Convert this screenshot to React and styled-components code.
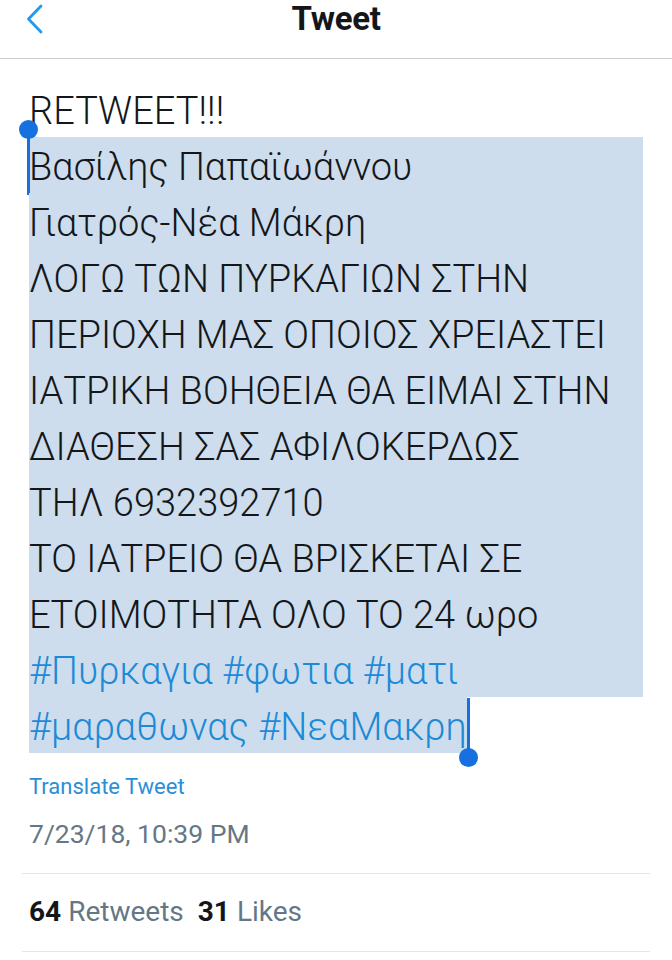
import styled, { createGlobalStyle } from "styled-components";

const GlobalStyle = createGlobalStyle`
  body {
    margin: 0;
    background: #ffffff;
    font-family: Roboto, "Noto Sans", sans-serif;
  }
`;

const lines = [
  { text: "Βασίλης Παπαϊωάννου" },
  { text: "Γιατρός-Νέα Μάκρη" },
  { text: "ΛΟΓΩ ΤΩΝ ΠΥΡΚΑΓΙΩΝ ΣΤΗΝ" },
  { text: "ΠΕΡΙΟΧΗ ΜΑΣ ΟΠΟΙΟΣ ΧΡΕΙΑΣΤΕΙ" },
  { text: "ΙΑΤΡΙΚΗ ΒΟΗΘΕΙΑ ΘΑ ΕΙΜΑΙ ΣΤΗΝ" },
  { text: "ΔΙΑΘΕΣΗ ΣΑΣ ΑΦΙΛΟΚΕΡΔΩΣ" },
  { text: "ΤΗΛ 6932392710" },
  { text: "ΤΟ ΙΑΤΡΕΙΟ ΘΑ ΒΡΙΣΚΕΤΑΙ ΣΕ" },
  { text: "ΕΤΟΙΜΟΤΗΤΑ ΟΛΟ ΤΟ 24 ωρο" },
];

const App = () => {
  return (
    <>
      <GlobalStyle />
      <Page>
        <Header>
          <BackButton aria-label="Back">
            <svg width="19" height="30" viewBox="0 0 19 30" fill="none">
              <path
                d="M16 2 L3.5 15 L16 28"
                stroke="#1d9bf0"
                strokeWidth="2.8"
                strokeLinecap="round"
                strokeLinejoin="round"
              />
            </svg>
          </BackButton>
          <Title>Tweet</Title>
        </Header>

        <Body>
          <Line>RETWEET!!!</Line>
          {lines.map((line, i) => (
            <Line key={i} $selected="full">
              {i === 0 && (
                <StartHandle>
                  <Knob />
                </StartHandle>
              )}
              {line.text}
            </Line>
          ))}
          <Line $selected="full">
            <Tag>#Πυρκαγια</Tag> <Tag>#φωτια</Tag> <Tag>#ματι</Tag>
          </Line>
          <Line>
            <Partial>
              <Tag>#μαραθωνας</Tag> <Tag>#ΝεαΜακρη</Tag>
              <EndHandle>
                <Knob $bottom />
              </EndHandle>
            </Partial>
          </Line>

          <Translate>Translate Tweet</Translate>
          <Timestamp>7/23/18, 10:39 PM</Timestamp>
        </Body>

        <Stats>
          <Stat>
            <Count>64</Count>
            <Label>Retweets</Label>
          </Stat>
          <Stat>
            <Count>31</Count>
            <Label>Likes</Label>
          </Stat>
        </Stats>
      </Page>
    </>
  );
};

export default App;

const Page = styled.div`
  width: 672px;
  min-height: 960px;
  background: #ffffff;
`;

const Header = styled.header`
  position: relative;
  height: 58px;
  display: flex;
  align-items: flex-start;
  justify-content: center;
  border-bottom: 1px solid #cfcfcf;
`;

const BackButton = styled.button`
  position: absolute;
  left: 25px;
  top: 4px;
  border: none;
  background: none;
  padding: 0;
  display: flex;
`;

const Title = styled.h1`
  margin: 0;
  font-family: Roboto, "Liberation Sans", sans-serif;
  font-weight: 700;
  font-size: 33px;
  line-height: 38px;
  letter-spacing: -0.3px;
  color: #14171a;
`;

const Body = styled.div`
  padding: 22px 29px 0 29px;
`;

const Line = styled.div`
  position: relative;
  height: 56px;
  box-sizing: border-box;
  padding-top: 5px;
  line-height: 51px;
  font-size: 38px;
  font-weight: 300;
  color: #14171a;
  white-space: nowrap;
  background: ${(p) => (p.$selected === "full" ? "#cddded" : "transparent")};
`;

const Partial = styled.span`
  position: relative;
  display: inline-block;
  height: 56px;
  margin-top: -5px;
  padding-top: 5px;
  box-sizing: border-box;
  background: #cddded;
  vertical-align: top;
`;

const Tag = styled.span`
  color: #1c8ad6;
`;

const StartHandle = styled.span`
  position: absolute;
  left: -2px;
  top: -8px;
  width: 3px;
  height: 66px;
  background: #1670e0;
`;

const EndHandle = styled.span`
  position: absolute;
  right: -3px;
  top: 1px;
  width: 3px;
  height: 60px;
  background: #1670e0;
`;

const Knob = styled.span`
  position: absolute;
  left: 50%;
  ${(p) => (p.$bottom ? "bottom: -9px;" : "top: -9px;")}
  width: 19px;
  height: 19px;
  margin-left: -9.5px;
  border-radius: 50%;
  background: #1670e0;
`;

const Translate = styled.div`
  margin-top: 22px;
  font-size: 22px;
  line-height: 24px;
  color: #2a8fd8;
`;

const Timestamp = styled.div`
  margin-top: 20px;
  padding-bottom: 24px;
  font-size: 26.5px;
  line-height: 30px;
  color: #657786;
  border-bottom: 1px solid #e1e8ed;
  margin-left: -7px;
  margin-right: -7px;
  padding-left: 7px;
`;

const Stats = styled.div`
  margin: 0 22px;
  padding: 22px 7px 0;
  height: 78px;
  box-sizing: border-box;
  border-bottom: 1px solid #e1e8ed;
  font-size: 28px;
  line-height: 32px;
  display: flex;
  gap: 14px;
`;

const Stat = styled.div`
  display: flex;
  gap: 7px;
`;

const Count = styled.span`
  font-weight: 700;
  color: #14171a;
`;

const Label = styled.span`
  color: #657786;
`;
